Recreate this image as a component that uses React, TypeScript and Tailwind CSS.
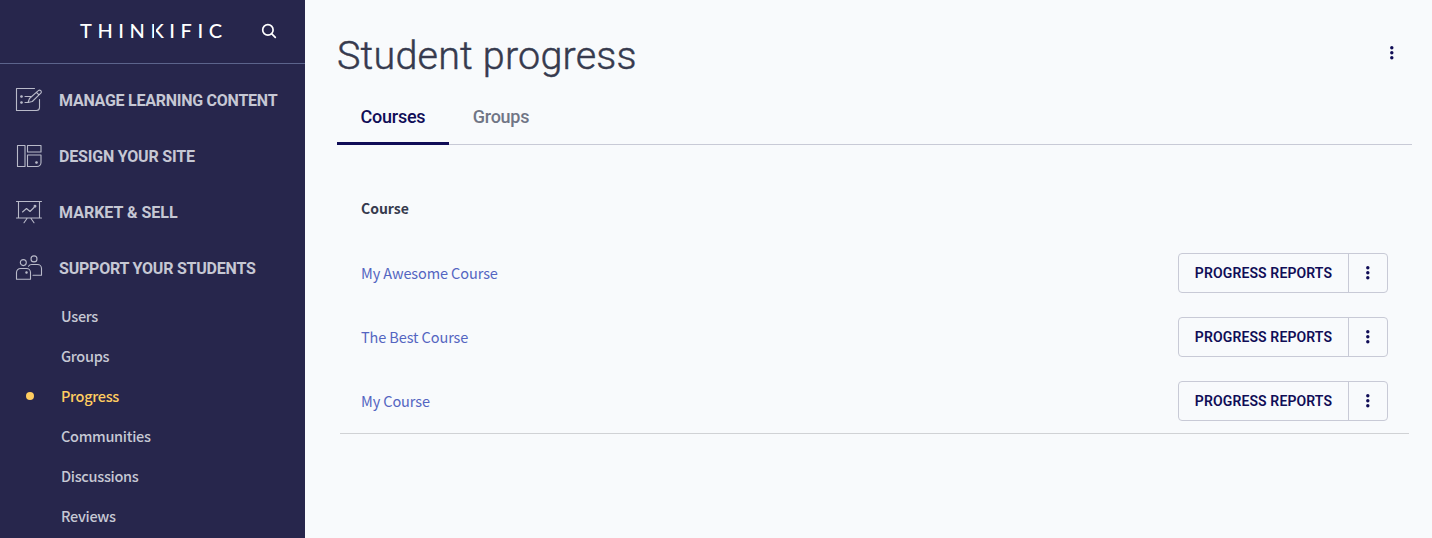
import type { ReactNode } from 'react';

const Kebab = () => (
  <svg width="6" height="16" viewBox="0 0 6 16" fill="#100d57">
    <circle cx="2.800" cy="2.800" r="1.700" />
    <circle cx="2.800" cy="7.800" r="1.700" />
    <circle cx="2.800" cy="12.800" r="1.700" />
  </svg>
);

const Icon = ({ children }: { children: ReactNode }) => (
  <svg
    className="shrink-0"
    width="28"
    height="28"
    viewBox="0 0 28 28"
    fill="none"
    stroke="#b9bac9"
    strokeWidth="1.1"
    strokeLinecap="round"
    strokeLinejoin="round"
  >
    {children}
  </svg>
);

const ContentIcon = () => (
  <Icon>
    <path d="M19.500 2.500H1.500v22h20a3 3 0 0 0 3-3v-8" />
    <path d="M13 16.500l1.500-4 8.800-7.800a1.750 1.750 0 0 1 2.500 2.500l-8.500 8.300zM21.500 6.500l2.500 2.400" />
    <path d="M10 10.500h6M10 16.500h3.200" />
    <circle cx="6.500" cy="10.500" r=".8" fill="#b9bac9" />
    <circle cx="6.500" cy="16.500" r=".8" fill="#b9bac9" />
  </Icon>
);

const DesignIcon = () => (
  <Icon>
    <path d="M2.500 3.500h7.500v21h-7.500zM12.500 3.500h13.500v6.500h-13.500zM12.500 13h13.500v7.500a4 4 0 0 1-4 4h-9.500z" />
    <circle cx="21.500" cy="20.500" r=".8" fill="#b9bac9" />
  </Icon>
);

const MarketIcon = () => (
  <Icon>
    <path d="M1.500 3.500h25M1.500 20h25M3.500 3.500v16.500M24.500 3.500v16.500M12 20.500l-3 4.200M16 20.500l3 4.200" />
    <path d="M7.500 14l4-3.500 3.500 3 4-4" />
    <circle cx="20" cy="8.200" r=".9" fill="#b9bac9" />
  </Icon>
);

const SupportIcon = () => (
  <Icon>
    <circle cx="8.300" cy="8.600" r="3" />
    <circle cx="19" cy="4.900" r="3" />
    <path d="M1.500 25.300v-6.800a4 4 0 0 1 4-4h6a4 4 0 0 1 4 4v6.800zM13.500 12.200a4 4 0 0 1 3.500-1.700h5.500a4 4 0 0 1 4 4v6.700h-8.500" />
    <circle cx="11.500" cy="18.500" r=".7" fill="#b9bac9" />
  </Icon>
);

const sections = [
  { label: 'MANAGE LEARNING CONTENT', icon: <ContentIcon />, tracking: 'tracking-[-0.25px]' },
  { label: 'DESIGN YOUR SITE', icon: <DesignIcon />, tracking: 'tracking-[-0.19px]' },
  { label: 'MARKET & SELL', icon: <MarketIcon />, tracking: 'tracking-[0px]' },
  { label: 'SUPPORT YOUR STUDENTS', icon: <SupportIcon />, tracking: 'tracking-[-0.22px]' },
];

const links = ['Users', 'Groups', 'Progress', 'Communities', 'Discussions', 'Reviews'];
const courses = ['My Awesome Course', 'The Best Course', 'My Course'];

const Logo = () => (
  <div className="mb-[3px] ml-[80px] flex w-[142px] justify-between font-['Lato',sans-serif] text-[20px] leading-6 font-medium text-white">
    <span>T</span>
    <span>H</span>
    <span>I</span>
    <span>N</span>
    <span className="relative">
      K
      <span className="absolute top-[4px] left-[4px] h-[16px] w-[1.500px] bg-[#27264c]" />
    </span>
    <span>I</span>
    <span>F</span>
    <span>I</span>
    <span>C</span>
  </div>
);

export default function App() {
  return (
    <div className="flex h-[538px] w-[1432px] overflow-hidden bg-[#f8fafc] font-['Noto_Sans_CJK_SC',sans-serif]">
      <aside className="w-[305px] shrink-0 bg-[#27264c]">
        <header className="flex h-16 items-center border-b border-[#5c648c]">
          <Logo />
          <svg className="mb-[2px] ml-[39px]" width="16" height="16" viewBox="0 0 16 16" fill="none" stroke="#fff" strokeWidth="1.700" strokeLinecap="round">
            <circle cx="6.900" cy="6.900" r="5.200" />
            <path d="M10.800 10.800l3.500 3.500" />
          </svg>
        </header>
        <nav className="pt-2">
          {sections.map((s) => (
            <div key={s.label} className="flex h-14 items-center pl-[15px]">
              {s.icon}
              <span className={`ml-4 pt-[2px] whitespace-nowrap font-['Roboto',sans-serif] text-[16px] font-bold text-[#c6c8d4] ${s.tracking}`}>
                {s.label}
              </span>
            </div>
          ))}
          {links.map((l) => (
            <div key={l} className="flex h-10 items-center pl-[26px]">
              <span className={l === 'Progress' ? 'size-2 rounded-full bg-[#ffcd60]' : 'size-2'} />
              <span
                className={
                  l === 'Progress'
                    ? 'ml-[27px] text-[14.5px] font-medium tracking-[-0.3px] text-[#ffcd60]'
                    : 'ml-[27px] text-[14.5px] font-medium tracking-[-0.3px] text-[#c6c8d4]'
                }
              >
                {l}
              </span>
            </div>
          ))}
        </nav>
      </aside>

      <main className="flex-1 pr-5 pl-8">
        <div className="flex h-[89px] items-center justify-between pt-5 pr-[17px]">
          <h1 className="pt-[2px] font-['Roboto',sans-serif] text-[39.5px] font-light tracking-[0.2px] text-[#363a4e] [-webkit-text-stroke:0.45px_#363a4e]">
            Student progress
          </h1>
          <div className="pb-[3px]">
            <Kebab />
          </div>
        </div>
        <div className="flex h-14 border-b border-[#c8cad6] font-['Roboto',sans-serif] text-[18px]">
          <div className="-mb-px flex w-28 items-center justify-center border-b-[3px] border-[#100d57] pt-[2px] text-[#100d57]">
            <span className="font-medium tracking-[-0.25px]">Courses</span>
          </div>
          <div className="-mb-px flex w-[104px] items-center justify-center border-b-[3px] border-transparent pt-[2px] text-[#707585]">
            <span className="font-medium tracking-[-0.25px]">Groups</span>
          </div>
        </div>
        <section className="mx-[3px] mt-8 border-b border-[#d0d2d5]">
          <div className="flex h-16 items-center pb-[2px] pl-[21px] text-[14px] font-bold text-[#363a4e]">Course</div>
          {courses.map((c) => (
            <div key={c} className="flex h-16 items-center justify-between pr-[21px] pl-[21px]">
              <a className="text-[14.5px] tracking-[-0.1px] text-[#5465c1]">{c}</a>
              <div className="flex h-10 w-[210px] rounded-[4px] border border-[#c8cad6]">
                <button className="w-[170px] border-r border-[#c8cad6] font-['Roboto',sans-serif] text-[14px] font-semibold tracking-[0.12px] whitespace-nowrap text-[#100d57]">
                  PROGRESS REPORTS
                </button>
                <button className="flex flex-1 items-center justify-center">
                  <Kebab />
                </button>
              </div>
            </div>
          ))}
        </section>
      </main>
    </div>
  );
}
